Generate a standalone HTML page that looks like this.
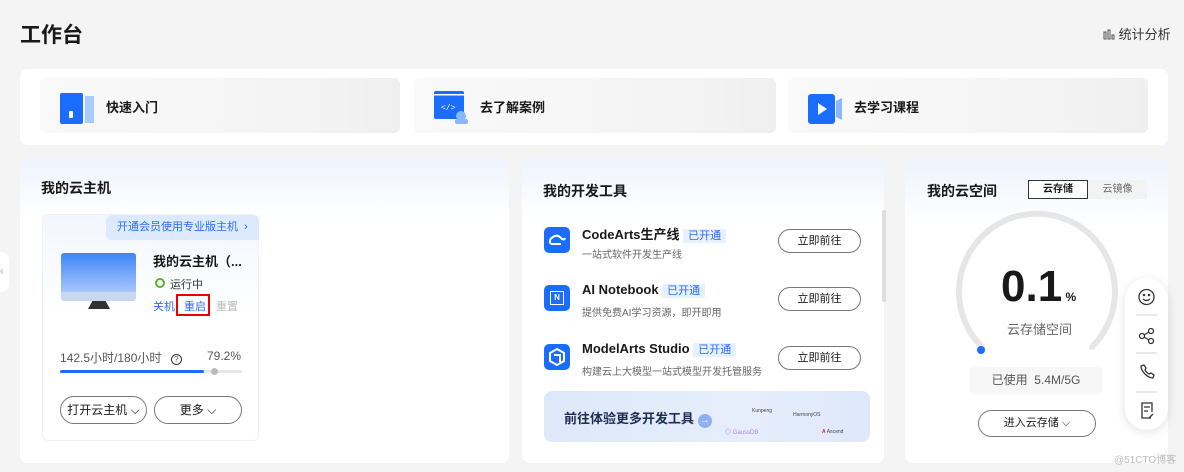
<!DOCTYPE html>
<html><head><meta charset="utf-8"><style>
*{box-sizing:border-box;margin:0;padding:0}
body{width:1184px;height:472px;background:#f4f4f4;font-family:"Liberation Sans","Noto Sans CJK SC",sans-serif;color:#191919;position:relative;overflow:hidden;font-size:12px}
.a{position:absolute}
.card{background:#fff;border-radius:8px}
.tile{background:linear-gradient(90deg,#f9f9f9,#f4f4f4 70%,#efefef);border-radius:6px;top:78px;height:55px}
.tile span{position:absolute;left:66px;top:19px;font-size:13px;font-weight:bold}
.btn{border:1px solid #777;border-radius:14px;text-align:center;font-size:12px;background:#fff}
.tag{background:#e6f0ff;color:#2a6ef5;font-size:11px;padding:1px 5px;border-radius:2px;font-weight:normal}
.ico{width:26px;height:26px;background:#1a6dff;border-radius:5px}
</style></head><body>
<div class="a" style="left:20px;top:19px;font-size:21px;font-weight:bold">工作台</div>
<div class="a" style="left:1103px;top:24px;font-size:13px;color:#333">
<svg width="12" height="11" style="vertical-align:-1px"><rect x="1" y="3" width="2" height="7" fill="none" stroke="#555"/><rect x="5" y="1" width="2" height="9" fill="none" stroke="#555"/><rect x="9" y="6" width="2" height="4" fill="none" stroke="#555"/></svg> 统计分析</div>
<div class="a" style="left:0;top:252px;width:9px;height:40px;background:#fff;border-radius:0 8px 8px 0;color:#999;font-size:10px;line-height:40px">‹</div>

<div class="a card" style="left:20px;top:69px;width:1148px;height:76px"></div>
<div class="a tile" style="left:40px;width:360px"><svg class="a" style="left:20px;top:12px" width="36" height="34"><rect x="0" y="3" width="23" height="31" fill="#1a6dff" rx="2"/><rect x="25" y="6" width="9" height="27" fill="#a9cbff"/><rect x="9" y="21" width="4" height="7" fill="#fff" rx="1"/></svg><span>快速入门</span></div>
<div class="a tile" style="left:414px;width:362px"><svg class="a" style="left:20px;top:12px" width="36" height="34"><rect x="0" y="1" width="30" height="28" fill="#1a6dff" rx="2"/><rect x="0" y="4" width="30" height="1.5" fill="#fff"/><text x="7" y="20" font-size="8" fill="#fff" font-family="Liberation Mono">&lt;/&gt;</text><circle cx="27" cy="26" r="5" fill="#8ab8ff"/><rect x="21" y="29" width="13" height="5" rx="2" fill="#8ab8ff"/></svg><span>去了解案例</span></div>
<div class="a tile" style="left:788px;width:360px"><svg class="a" style="left:20px;top:12px" width="36" height="34"><rect x="0" y="4" width="27" height="30" rx="3" fill="#1a6dff"/><path d="M28 11 L34 8 L34 30 L28 27Z" fill="#8ab8ff"/><path d="M10 13 L19 19 L10 25Z" fill="#fff"/></svg><span>去学习课程</span></div>

<!-- left card -->
<div class="a card" style="left:20px;top:158px;width:489px;height:305px;background:linear-gradient(180deg,#eef3fd 0,#fff 60px)"></div>
<div class="a" style="left:41px;top:178px;font-size:14px;font-weight:bold">我的云主机</div>
<div class="a" style="left:42px;top:214px;width:217px;height:227px;border:1px solid #edf1f8;border-radius:6px;background:linear-gradient(180deg,#f2f6fe,#fff 45%)"></div>
<div class="a" style="left:106px;top:215px;width:153px;height:25px;background:#dde9fc;border-radius:6px 6px 0 6px;color:#2a6ef5;font-size:11px;line-height:25px;padding-left:11px">开通会员使用专业版主机 &nbsp;›</div>
<div class="a" style="left:61px;top:253px;width:75px;height:48px;border-radius:3px;background:linear-gradient(180deg,#3d84f7,#a6c6fb 80%,#c9d8ef 82%)"></div>
<div class="a" style="left:88px;top:301px;width:22px;height:8px;background:#333;clip-path:polygon(20% 0,80% 0,100% 100%,0 100%)"></div>
<div class="a" style="left:153px;top:251px;font-size:13px;font-weight:bold">我的云主机（...</div>
<div class="a" style="left:155px;top:278px;width:10px;height:10px;border:2.5px solid #54b52a;border-radius:50%"></div>
<div class="a" style="left:170px;top:276px;font-size:11px;color:#333">运行中</div>
<div class="a" style="left:153px;top:298px;font-size:11px;color:#2a6ef5">关机</div>
<div class="a" style="left:176px;top:294px;width:34px;height:22px;border:2px solid #e00;font-size:11px;color:#2a6ef5;padding:2px 0 0 6px">重启</div>
<div class="a" style="left:216px;top:298px;font-size:11px;color:#bbb">重置</div>
<div class="a" style="left:60px;top:349px;font-size:12px;color:#555">142.5小时/180小时 <span style="display:inline-block;width:11px;height:11px;border:1px solid #333;border-radius:50%;font-size:8px;text-align:center;line-height:9px;margin-left:6px">?</span></div>
<div class="a" style="left:207px;top:349px;font-size:12px;color:#555">79.2%</div>
<div class="a" style="left:60px;top:370px;width:182px;height:3px;background:#e8e8e8;border-radius:2px"></div>
<div class="a" style="left:60px;top:370px;width:144px;height:3px;background:#1a6dff;border-radius:2px"></div>
<div class="a" style="left:211px;top:368px;width:7px;height:7px;background:#bbb;border-radius:50%"></div>
<div class="a btn" style="left:60px;top:396px;width:87px;height:28px;line-height:26px">打开云主机 ⌵</div>
<div class="a btn" style="left:154px;top:396px;width:88px;height:28px;line-height:26px">更多 ⌵</div>

<!-- middle card -->
<div class="a card" style="left:522px;top:158px;width:362px;height:305px;background:linear-gradient(180deg,#eef3fd 0,#fff 60px)"></div>
<div class="a" style="left:543px;top:181px;font-size:14px;font-weight:bold">我的开发工具</div>
<div class="a" style="left:882px;top:210px;width:4px;height:92px;background:#ddd;border-radius:2px"></div>
<div class="a ico" style="left:544px;top:227px"><svg width="26" height="26" fill="none" stroke="#fff" stroke-width="2"><path d="M7 17q-3-4 2-7q4-3 8 1q3 3 4 0"/><path d="M7 17h10"/></svg></div>
<div class="a ico" style="left:544px;top:285px"><div style="margin:6px;width:14px;height:14px;border:1.5px solid #fff;color:#fff;font-size:8px;font-weight:bold;text-align:center;line-height:11px">N</div></div>
<div class="a ico" style="left:544px;top:344px"><svg width="26" height="26" fill="none" stroke="#fff" stroke-width="2"><path d="M6 9l7-4 7 4v8l-7 4-7-4z"/><path d="M10 11h6v7"/></svg></div>
<div class="a" style="left:582px;top:224px;font-size:13px;font-weight:bold">CodeArts生产线 <span class="tag">已开通</span></div>
<div class="a" style="left:582px;top:246px;font-size:10px;color:#666">一站式软件开发生产线</div>
<div class="a" style="left:582px;top:282px;font-size:13px;font-weight:bold">AI Notebook <span class="tag">已开通</span></div>
<div class="a" style="left:582px;top:304px;font-size:10px;color:#666">提供免费AI学习资源，即开即用</div>
<div class="a" style="left:582px;top:341px;font-size:13px;font-weight:bold">ModelArts Studio <span class="tag">已开通</span></div>
<div class="a" style="left:582px;top:363px;font-size:10px;color:#666">构建云上大模型一站式模型开发托管服务</div>
<div class="a btn" style="left:778px;top:229px;width:83px;height:24px;line-height:22px;font-size:11px">立即前往</div>
<div class="a btn" style="left:778px;top:287px;width:83px;height:24px;line-height:22px;font-size:11px">立即前往</div>
<div class="a btn" style="left:778px;top:346px;width:83px;height:24px;line-height:22px;font-size:11px">立即前往</div>
<div class="a" style="left:544px;top:391px;width:326px;height:51px;border-radius:8px;background:linear-gradient(90deg,#dde8fa,#e6eefc 60%,#dfe8fb)"></div>
<div class="a" style="left:564px;top:408px;font-size:13px;font-weight:bold;color:#1d2e50">前往体验更多开发工具 <span style="display:inline-block;width:14px;height:14px;border-radius:50%;background:#8fb0f0;color:#fff;font-size:10px;text-align:center;line-height:14px">→</span></div>
<div class="a" style="left:752px;top:408px;font-size:5px;color:#444">Kunpeng</div>
<div class="a" style="left:793px;top:412px;font-size:5px;color:#444">HarmonyOS</div>
<div class="a" style="left:725px;top:427px;font-size:6px;color:#b085e0">◎ GaussDB</div>
<div class="a" style="left:822px;top:429px;font-size:5px;color:#444"><b style="color:#d22">A</b> Ascend</div>

<!-- right card -->
<div class="a card" style="left:905px;top:158px;width:263px;height:305px;background:linear-gradient(180deg,#eef3fd 0,#fff 70px)"></div>
<div class="a" style="left:927px;top:181px;font-size:14px;font-weight:bold">我的云空间</div>
<div class="a" style="left:1088px;top:180px;width:59px;height:19px;background:#f3f3f3;font-size:10px;color:#666;text-align:center;line-height:19px">云镜像</div>
<div class="a" style="left:1028px;top:180px;width:60px;height:19px;border:1px solid #333;background:#fff;font-size:10px;font-weight:bold;text-align:center;line-height:17px">云存储</div>
<svg class="a" style="left:950px;top:205px" width="174" height="155"><path d="M32 142 A78 78 0 1 1 142 142" fill="none" stroke="#e6e6e6" stroke-width="6" stroke-linecap="round"/><circle cx="31" cy="145" r="4" fill="#1a6dff"/></svg>
<div class="a" style="left:1001px;top:262px;font-size:44px;font-weight:bold">0.1<span style="font-size:12px"> %</span></div>
<div class="a" style="left:1007px;top:319px;font-size:13px;color:#666">云存储空间</div>
<div class="a" style="left:970px;top:367px;width:132px;height:27px;background:#f7f7f7;border-radius:4px;font-size:12px;color:#555;text-align:center;line-height:27px">已使用 &nbsp;5.4M/5G</div>
<div class="a btn" style="left:978px;top:410px;width:118px;height:27px;line-height:25px;font-size:11px">进入云存储 ⌵</div>
<div class="a" style="left:1114px;top:451px;font-size:10px;color:#bbb">@51CTO博客</div>

<div class="a" style="left:1125px;top:278px;width:43px;height:152px;background:#fff;border-radius:22px;box-shadow:0 2px 10px rgba(0,0,0,.12)"></div>
<svg class="a" style="left:1125px;top:278px" width="43" height="152" fill="none" stroke="#333" stroke-width="1.3">
<circle cx="21.5" cy="19" r="7.5"/><circle cx="19" cy="17" r=".6" fill="#333"/><circle cx="24" cy="17" r=".6" fill="#333"/><path d="M18 21q3.5 3 7 0"/>
<line x1="11" y1="37" x2="32" y2="37" stroke="#ddd"/>
<circle cx="26" cy="53" r="2.5"/><circle cx="17" cy="58" r="2.5"/><circle cx="26" cy="63" r="2.5"/><path d="M19 57l5-3M19 59l5 3"/>
<line x1="11" y1="75" x2="32" y2="75" stroke="#ddd"/>
<path d="M16 88q0 4 4 8t8 4l1-3-3-2-2 1q-3-2-4-4l1-2-2-3z"/>
<line x1="11" y1="114" x2="32" y2="114" stroke="#ddd"/>
<path d="M26 140h-9v-15h10v9M19 129h6M19 133h4M24 140l4-4"/>
</svg>
</body></html>
